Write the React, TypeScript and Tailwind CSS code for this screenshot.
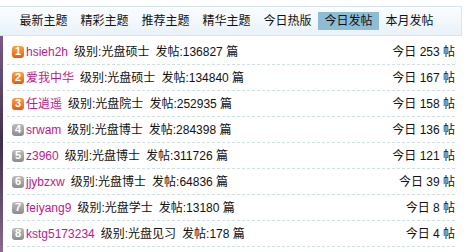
import React from 'react';

const tabs = ['最新主题', '精彩主题', '推荐主题', '精华主题', '今日热版', '今日发帖', '本月发帖'];

interface Row {
  rank: number;
  name: string;
  level: string;
  posts: number;
  today: number;
}

const rows: Row[] = [
  { rank: 1, name: 'hsieh2h', level: '光盘硕士', posts: 136827, today: 253 },
  { rank: 2, name: '爱我中华', level: '光盘硕士', posts: 134840, today: 167 },
  { rank: 3, name: '任逍遥', level: '光盘院士', posts: 252935, today: 158 },
  { rank: 4, name: 'srwam', level: '光盘博士', posts: 284398, today: 136 },
  { rank: 5, name: 'z3960', level: '光盘博士', posts: 311726, today: 121 },
  { rank: 6, name: 'jjybzxw', level: '光盘博士', posts: 64836, today: 39 },
  { rank: 7, name: 'feiyang9', level: '光盘学士', posts: 13180, today: 8 },
  { rank: 8, name: 'kstg5173234', level: '光盘见习', posts: 178, today: 4 },
];

const Badge: React.FC<{ rank: number }> = ({ rank }) => (
  <span
    className={`mr-[2px] inline-flex h-[12px] w-[12px] shrink-0 items-center justify-center rounded-[3px] text-[11px] font-bold leading-none text-white ${
      rank <= 3
        ? 'bg-gradient-to-b from-[#f8a048] to-[#e45c06]'
        : 'bg-gradient-to-b from-[#bdbdbd] to-[#8c8c8c]'
    }`}
  >
    {rank}
  </span>
);

export default function App() {
  return (
    <div
      className="flex h-[252px] w-[468px] flex-col overflow-hidden bg-white pt-[6px] text-[12px] text-[#111]"
      style={{ fontFamily: '"Liberation Sans", "Noto Sans CJK SC", sans-serif' }}
    >
      {/* Tab bar */}
      <div className="flex h-[30px] w-[462px] shrink-0 items-center border-y border-r border-[#d6e5f0] bg-gradient-to-b from-[#fbfdff] to-[#e9f2f9] pl-[13px]">
        {tabs.map(tab => (
          <span
            key={tab}
            className={`flex h-[18px] w-[61px] items-center justify-center ${
              tab === '今日发帖' ? 'bg-[#8dbcd7]' : ''
            }`}
          >
            {tab}
          </span>
        ))}
      </div>

      <div className="flex flex-1">
        <div className="w-[3px] bg-gradient-to-b from-[#7a5a86] via-[#3e2f4a] to-[#8a6a8e]" />
        <ul className="mt-[3px] ml-[4px] w-[448px]">
          {rows.map(row => (
            <li
              key={row.rank}
              className="flex h-[26px] items-center border-b border-dashed border-[#cfe0e3] pl-[5px]"
            >
              <Badge rank={row.rank} />
              <span className="text-[#c0178c]">{row.name}</span>
              <span className="ml-[6px]">级别:{row.level}</span>
              <span className="ml-[6px]">发帖:{row.posts} 篇</span>
              <span className="ml-auto">今日 {row.today} 帖</span>
            </li>
          ))}
        </ul>
      </div>
    </div>
  );
}
